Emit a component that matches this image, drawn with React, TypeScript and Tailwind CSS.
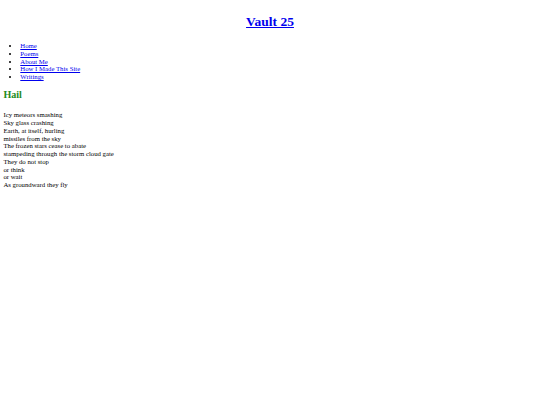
import React from "react";

export default function App() {
  const poem = [
    "Icy meteors smashing",
    "Sky glass crashing",
    "Earth, at itself, hurling",
    "missiles from the sky",
    "The frozen stars cease to abate",
    "stampeding through the storm cloud gate",
    "They do not stop",
    "or think",
    "or wait",
    "As groundward they fly",
  ];
  const nav = ["Home", "Poems", "About Me", "How I Made This Site", "Writings"];
  return (
    <div
      className="flex min-h-[405px] flex-col bg-white px-[3.4px] pt-[3.4px] text-[6.75px] leading-[1.15] text-black"
      style={{ fontFamily: '"Liberation Serif", "Times New Roman", serif' }}
    >
      <h1 className="mt-[10.3px] text-center text-[13.5px] font-bold leading-[1.15]">
        <a href="#" className="text-[#0000EE] underline">Vault 25</a>
      </h1>
      <ul className="mt-[12.8px] list-disc pl-[16.9px]">
        {nav.map((n) => (
          <li key={n}>
            <a href="#" className="text-[#0000EE] underline">{n}</a>
          </li>
        ))}
      </ul>
      <h2 className="mt-[8.4px] text-[10.1px] font-bold leading-[1.15] text-[#228B22]">Hail</h2>
      <p className="mt-[10.7px]">
        {poem.map((l, i) => (
          <React.Fragment key={i}>
            {l}
            <br />
          </React.Fragment>
        ))}
      </p>
    </div>
  );
}
